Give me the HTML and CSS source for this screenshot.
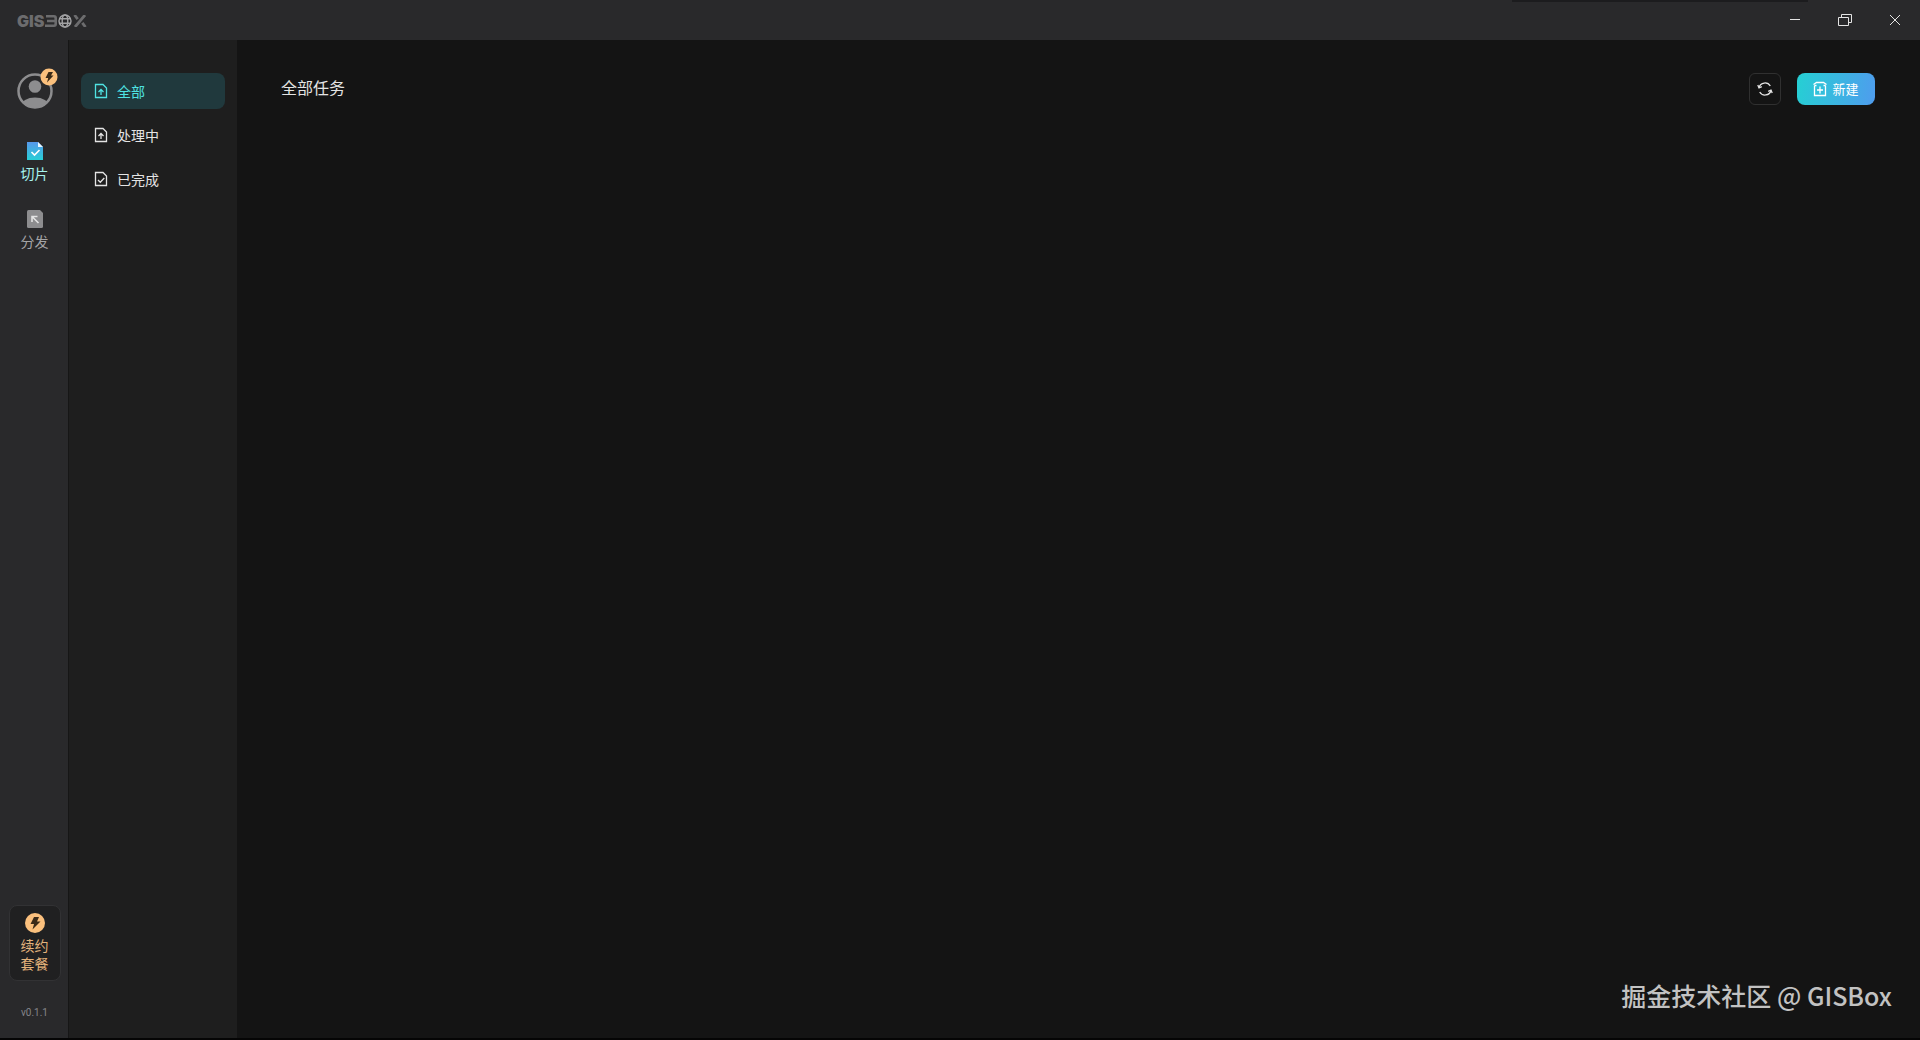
FILE: index.html
```html
<!DOCTYPE html>
<html lang="zh-CN">
<head>
    <meta charset="UTF-8">
    <meta name="viewport" content="width=device-width, initial-scale=1.0">
    <title>GISBox</title>
    <link rel="stylesheet" href="styles.css">
</head>
<body>
    <header class="titlebar">
        <div class="logo">
            <span>GIS</span>
            <svg class="logo-bars" viewBox="0 0 12 12" fill="none" stroke="currentColor" stroke-width="2.6">
                <path d="M1 1.3h8q1.7 0 1.7 1.7v6q0 1.7-1.7 1.7H0M2 6h8"></path>
            </svg>
            <svg class="logo-globe" viewBox="0 0 14 14" fill="none" stroke="currentColor" stroke-width="1.4">
                <circle cx="7" cy="7" r="6"></circle>
                <ellipse cx="7" cy="7" rx="2.8" ry="6"></ellipse>
                <path d="M1.5 4.8h11M1.5 9.2h11"></path>
            </svg>
            <svg class="logo-cross" viewBox="0 0 14 12" fill="none" stroke="currentColor" stroke-width="2.8">
                <path d="M12 0L2 12M1.5 0l3.2 4.2M9.300 7.8l3.2 4.2"></path>
            </svg>
        </div>
        <div class="window-controls">
            <button type="button" aria-label="最小化">
                <svg viewBox="0 0 14 14" fill="none" stroke="currentColor"><path d="M2 6.5h10"></path></svg>
            </button>
            <button type="button" aria-label="还原">
                <svg viewBox="0 0 14 14" fill="none" stroke="currentColor"><path d="M.5 4.5h10v8H.5zM3.5 4.5v-3h10v8h-3"></path></svg>
            </button>
            <button type="button" aria-label="关闭">
                <svg viewBox="0 0 14 14" fill="none" stroke="currentColor"><path d="M2 2l10 10M12 2L2 12"></path></svg>
            </button>
        </div>
    </header>

    <div class="app">
        <nav class="rail">
            <a class="avatar" href="#" aria-label="用户">
                <svg class="avatar-icon" viewBox="0 0 36 36">
                    <clipPath id="avatarClip"><circle cx="18" cy="18" r="17"></circle></clipPath>
                    <circle cx="18" cy="18" r="16.5" fill="none" stroke="#8d8d8f" stroke-width="2.5"></circle>
                    <circle cx="18" cy="13.5" r="6.3" fill="#8d8d8f"></circle>
                    <ellipse cx="18" cy="33" rx="14" ry="8.5" fill="#8d8d8f" clip-path="url(#avatarClip)"></ellipse>
                </svg>
                <svg class="avatar-badge" viewBox="0 0 20 20">
                    <circle cx="10" cy="10" r="8.5" fill="#fbc07d"></circle>
                    <path d="M9.5 5H14l-2 3.6h2.5L8 15.5l1.2-4.6H6.5z" fill="#3a2a18"></path>
                </svg>
            </a>
            <a class="rail-item active" href="#">
                <svg viewBox="0 0 16 18">
                    <defs>
                        <linearGradient id="sliceFill" x1="0" y1="0" x2="0" y2="1">
                            <stop offset="0" stop-color="#5797ea"></stop>
                            <stop offset="1" stop-color="#27cfd7"></stop>
                        </linearGradient>
                    </defs>
                    <path d="M0 0h11l5 5v13H0z" fill="url(#sliceFill)"></path>
                    <path d="M11 0l5 5h-5z" fill="#e8f6ff"></path>
                    <path d="M4.5 10l3 3 5-5" fill="none" stroke="#fff" stroke-width="1.6"></path>
                </svg>
                <span>切片</span>
            </a>
            <a class="rail-item" href="#">
                <svg viewBox="0 0 16 18">
                    <path d="M1.5 0H13l3 3v13.5q0 1.5-1.5 1.5h-13Q0 18 0 16.5v-15Q0 0 1.5 0z" fill="#8d8d8f"></path>
                    <path d="M5 12V6.5h5.5M5.500 7l6 6" fill="none" stroke="#e4e4e4" stroke-width="1.6"></path>
                </svg>
                <span>分发</span>
            </a>
            <div class="rail-bottom">
                <button type="button" class="renew">
                    <svg viewBox="0 0 20 20">
                        <circle cx="10" cy="10" r="10" fill="#fbc07d"></circle>
                        <path d="M9 4h5l-2 4.5h3.5l-8 8L9 11H5.5z" fill="#3a2a18"></path>
                    </svg>
                    <span>续约<br>套餐</span>
                </button>
                <span class="version">v0.1.1</span>
            </div>
        </nav>

        <aside class="sidebar">
            <a class="side-item active" href="#">
                <svg viewBox="0 0 14 16" fill="none" stroke="currentColor" stroke-width="1.3">
                    <path d="M1.5 1.5H9L12.5 5v9.5h-11z"></path>
                    <path d="M7 12V7M4.5 9L7 6.5 9.5 9"></path>
                </svg>
                <span>全部</span>
            </a>
            <a class="side-item" href="#">
                <svg viewBox="0 0 14 16" fill="none" stroke="currentColor" stroke-width="1.3">
                    <path d="M1.5 1.5H9L12.5 5v9.5h-11z"></path>
                    <path d="M7 12V7M4.5 9L7 6.5 9.5 9"></path>
                </svg>
                <span>处理中</span>
            </a>
            <a class="side-item" href="#">
                <svg viewBox="0 0 14 16" fill="none" stroke="currentColor" stroke-width="1.3">
                    <path d="M1.5 1.5H9L12.5 5v9.5h-11z"></path>
                    <path d="M4 9l2.3 2.3 4-4.3"></path>
                </svg>
                <span>已完成</span>
            </a>
        </aside>

        <main class="content">
            <div class="content-header">
                <h1>全部任务</h1>
                <div class="actions">
                    <button type="button" class="refresh" aria-label="刷新">
                        <svg viewBox="0 0 16 16" fill="none" stroke="currentColor" stroke-width="1.3">
                            <path d="M2 6.5A6.2 6.2 0 0 1 13.3 5M14 9.5A6.2 6.2 0 0 1 2.7 11"></path>
                            <path d="M.8 4L2 6.8l2.800-1.2M15.2 12L14 9.2l-2.800 1.2"></path>
                        </svg>
                    </button>
                    <button type="button" class="create">
                        <svg viewBox="0 0 14 16" fill="none" stroke="currentColor" stroke-width="1.3">
                            <path d="M1.5 4.500v10h11v-10M.5 3.500l3-2h7l3 2M1.5 4.500h2M10.5 4.500h2M7 5.500v7M4 9h6"></path>
                        </svg>
                        <span>新建</span>
                    </button>
                </div>
            </div>
            <p class="watermark">掘金技术社区 @ GISBox</p>
        </main>
    </div>
</body>
</html>
```

FILE: styles.css
```css
* {
    box-sizing: border-box;
}
body {
    margin: 0;
    min-height: 100vh;
    display: flex;
    flex-direction: column;
    font-family: "Noto Sans CJK SC", sans-serif;
    font-size: 14px;
    background-color: #141414;
    color: #e4e4e4;
    border-bottom: 2px solid #050505;
}
a {
    color: inherit;
    text-decoration: none;
}
button {
    padding: 0;
    border: none;
    background: none;
    font: inherit;
    color: inherit;
    cursor: pointer;
}
svg {
    display: block;
}
.titlebar {
    height: 40px;
    padding-left: 17px;
    display: flex;
    align-items: center;
    justify-content: space-between;
    background: linear-gradient(#1c1c1e, #1c1c1e) right 112px top / 296px 2px no-repeat #29292b;
}
.logo {
    padding-top: 2px;
    display: flex;
    align-items: center;
    gap: 1px;
    color: #6c6c6e;
    font-family: Inter, sans-serif;
    font-size: 16px;
    font-weight: 900;
}
.logo-bars {
    width: 12px;
    height: 12px;
}
.logo-globe {
    width: 14px;
    height: 14px;
    color: #a2a2a4;
}
.logo-cross {
    width: 14px;
    height: 12px;
}
.window-controls {
    display: flex;
}
.window-controls button {
    width: 50px;
    height: 40px;
    display: flex;
    align-items: center;
    justify-content: center;
}
.window-controls svg {
    width: 14px;
    height: 14px;
}
.app {
    flex: 1;
    display: flex;
}
.rail {
    width: 69px;
    padding: 33px 0 0 1px;
    display: flex;
    flex-direction: column;
    align-items: center;
    background-color: #29292b;
    border-right: 1px solid #161616;
}
.avatar {
    position: relative;
    margin-bottom: 33px;
}
.avatar-icon {
    width: 36px;
    height: 36px;
}
.avatar-badge {
    position: absolute;
    top: -6px;
    right: -6px;
    width: 20px;
    height: 20px;
}
.rail-item {
    height: 44px;
    margin-bottom: 24px;
    display: flex;
    flex-direction: column;
    align-items: center;
    gap: 3px;
    line-height: 20px;
    color: #a4a4a6;
}
.rail-item.active {
    color: #a5f3ee;
}
.rail-item svg {
    width: 16px;
    height: 18px;
}
.rail-bottom {
    margin-top: auto;
    display: flex;
    flex-direction: column;
    align-items: center;
}
.renew {
    width: 52px;
    height: 76px;
    padding-bottom: 2px;
    display: flex;
    flex-direction: column;
    align-items: center;
    justify-content: center;
    gap: 3px;
    line-height: 18px;
    color: #e3b37c;
    background-color: #202021;
    border: 1px solid #323234;
    border-radius: 8px;
}
.renew svg {
    width: 20px;
    height: 20px;
}
.version {
    margin: 24px 0 17px;
    font-family: Roboto, sans-serif;
    font-size: 10px;
    line-height: 16px;
    color: #85858a;
}
.sidebar {
    width: 168px;
    padding: 33px 12px;
    display: flex;
    flex-direction: column;
    gap: 8px;
    background-color: #1e1e1e;
}
.side-item {
    height: 36px;
    padding: 0 0 1px 13px;
    display: flex;
    align-items: center;
    gap: 9px;
    border-radius: 8px;
}
.side-item.active {
    background-color: #20393d;
    color: #4fe3e3;
}
.side-item svg {
    width: 14px;
    height: 16px;
}
.content {
    flex: 1;
    padding: 33px 45px 25px 44px;
    display: flex;
    flex-direction: column;
    justify-content: space-between;
}
.content-header {
    display: flex;
    align-items: flex-start;
    justify-content: space-between;
}
h1 {
    margin: 0;
    font-size: 16px;
    font-weight: normal;
    line-height: 28px;
}
.actions {
    display: flex;
    gap: 16px;
}
.refresh {
    width: 32px;
    height: 32px;
    display: flex;
    align-items: center;
    justify-content: center;
    border: 1px solid #303030;
    border-radius: 6px;
}
.refresh svg {
    width: 16px;
    height: 16px;
}
.create {
    width: 78px;
    height: 32px;
    padding-bottom: 1px;
    display: flex;
    align-items: center;
    justify-content: center;
    gap: 5px;
    border-radius: 8px;
    background: linear-gradient(100deg, #25d0d3, #4f9cee);
    color: #fff;
    font-size: 13px;
}
.create svg {
    width: 14px;
    height: 16px;
}
.watermark {
    margin: 0 -17px 0 0;
    align-self: flex-end;
    font-size: 25px;
    font-weight: 500;
    line-height: 36px;
    color: #c2c2c2;
}
```
